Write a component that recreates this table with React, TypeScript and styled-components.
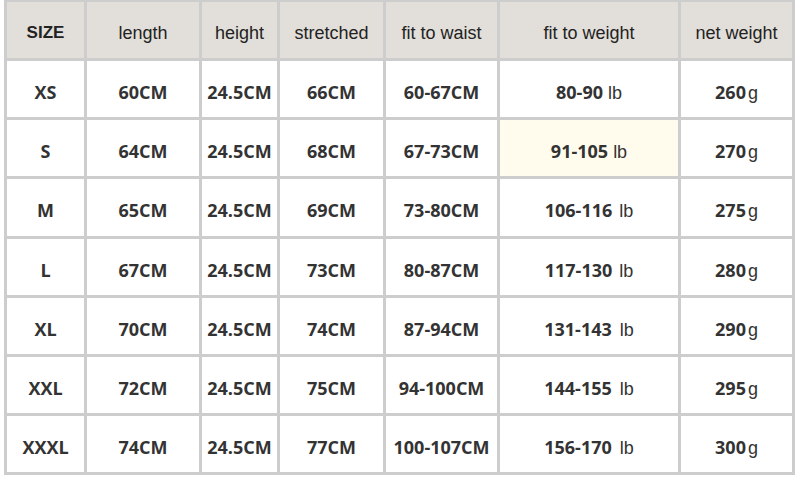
import React from "react";
import styled, { createGlobalStyle } from "styled-components";

const Global = createGlobalStyle`
  html, body { margin: 0; padding: 0; background: #ffffff; }
  * { box-sizing: border-box; }
`;

const Table = styled.div`
  margin-left: 4px;
  width: 791px;
  height: 475px;
  display: grid;
  grid-template-columns: 77px 112px 75px 103px 111px 178px 111px;
  grid-template-rows: repeat(8, 1fr);
  gap: 3px;
  padding: 2px 3px 3px 3px;
  background: #cdcdcd;
`;

const Cell = styled.div<{ $head?: boolean; $hl?: boolean }>`
  display: flex;
  align-items: center;
  justify-content: center;
  padding-top: 6px;
  white-space: nowrap;
  background: ${(p) => (p.$head ? "#e2dfda" : p.$hl ? "#fffcee" : "#ffffff")};
  color: #2c2c2c;
`;

const Content = styled.span`
  display: inline-block;
`;

const HeadText = styled.span<{ $bold?: boolean }>`
  font-family: "Liberation Sans", Arial, sans-serif;
  font-size: ${(p) => (p.$bold ? 17 : 18)}px;
  font-weight: ${(p) => (p.$bold ? 700 : 400)};
  color: #222;
`;

const Val = styled.span`
  font-family: "Open Sans", "Noto Sans", sans-serif;
  font-size: 18px;
  font-weight: 700;
  color: #333;
`;

const Unit = styled.span<{ $gap: number }>`
  font-family: "Liberation Sans", Arial, sans-serif;
  font-size: 18px;
  font-weight: 400;
  color: #333;
  margin-left: ${(p) => p.$gap}px;
`;

const headers = ["length", "height", "stretched", "fit to waist", "fit to weight", "net weight"];

const rows = [
  { s: "XS", l: "60CM", st: "66CM", w: "60-67CM", fw: "80-90", g: "260", gap: 5 },
  { s: "S", l: "64CM", st: "68CM", w: "67-73CM", fw: "91-105", g: "270", gap: 5, hl: true },
  { s: "M", l: "65CM", st: "69CM", w: "73-80CM", fw: "106-116", g: "275", gap: 7 },
  { s: "L", l: "67CM", st: "73CM", w: "80-87CM", fw: "117-130", g: "280", gap: 7 },
  { s: "XL", l: "70CM", st: "74CM", w: "87-94CM", fw: "131-143", g: "290", gap: 8 },
  { s: "XXL", l: "72CM", st: "75CM", w: "94-100CM", fw: "144-155", g: "295", gap: 8 },
  { s: "XXXL", l: "74CM", st: "77CM", w: "100-107CM", fw: "156-170", g: "300", gap: 8 },
];

export default function App() {
  return (
    <>
      <Global />
      <Table>
        <Cell $head>
          <HeadText $bold>SIZE</HeadText>
        </Cell>
        {headers.map((h) => (
          <Cell $head key={h}>
            <HeadText>{h}</HeadText>
          </Cell>
        ))}
        {rows.map((r) => (
          <React.Fragment key={r.s}>
            <Cell><Val>{r.s}</Val></Cell>
            <Cell><Val>{r.l}</Val></Cell>
            <Cell><Val>24.5CM</Val></Cell>
            <Cell><Val>{r.st}</Val></Cell>
            <Cell><Val>{r.w}</Val></Cell>
            <Cell $hl={r.hl}>
              <Content>
                <Val>{r.fw}</Val>
                <Unit $gap={r.gap}>lb</Unit>
              </Content>
            </Cell>
            <Cell>
              <Content>
                <Val>{r.g}</Val>
                <Unit $gap={2}>g</Unit>
              </Content>
            </Cell>
          </React.Fragment>
        ))}
      </Table>
    </>
  );
}
